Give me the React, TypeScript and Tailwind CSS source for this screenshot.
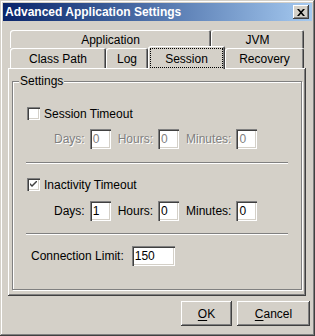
const FONT = "font-['Liberation_Sans',Arial,sans-serif]";

const raised = 'shadow-[inset_-1px_-1px_#404040,inset_1px_1px_#fff,inset_-2px_-2px_#808080]';
const sunken = 'shadow-[inset_1px_1px_#808080,inset_2px_2px_#404040,inset_-1px_-1px_#fff,inset_-2px_-2px_#d4d0c8]';
const tabEdge = 'rounded-tl-[3px] rounded-tr-[2px] shadow-[inset_1px_1px_#fff,inset_-1px_0_#404040,inset_-2px_0_#808080]';

const Tab = ({ label, w, h = 'h-[20px]' }: { label: string; w: string; h?: string }) => (
  <div className={`${w} ${h} ${tabEdge} flex items-center justify-center pt-[2px] text-black`}>{label}</div>
);

const Field = ({ value, w = 'w-[21px]', disabled = false }: { value: string; w?: string; disabled?: boolean }) => (
  <div className={`${w} h-[20px] bg-white ${sunken} flex items-center pl-[3px] ${disabled ? 'text-[#808080]' : 'text-black'}`}>
    {value}
  </div>
);

const Label = ({ text, disabled = false }: { text: string; disabled?: boolean }) => (
  <span className={disabled ? 'text-[#808080] [text-shadow:1px_1px_#fff]' : 'text-black'}>{text}</span>
);

const Check = ({ checked, label }: { checked: boolean; label: string }) => (
  <div className="flex items-center h-[13px] ml-[14px]">
    <div className={`w-[13px] h-[13px] bg-white ${sunken} flex items-center justify-center`}>
      {checked && (
        <svg width="7" height="7" viewBox="0 0 7 7">
          <path d="M0 2 L0 4 L2 6 L7 1 L7 -1 L2 4 Z" fill="#404040" />
        </svg>
      )}
    </div>
    <span className="ml-[4px] text-black">{label}</span>
  </div>
);

const TimeRow = ({ d, h, m, disabled = false }: { d: string; h: string; m: string; disabled?: boolean }) => (
  <div className="flex items-center h-[20px] ml-[41px]">
    <Label text="Days:" disabled={disabled} />
    <div className="ml-[5px]"><Field value={d} disabled={disabled} /></div>
    <div className="ml-[7px]"><Label text="Hours:" disabled={disabled} /></div>
    <div className="ml-[5px]"><Field value={h} disabled={disabled} /></div>
    <div className="ml-[7px]"><Label text="Minutes:" disabled={disabled} /></div>
    <div className="ml-[5px]"><Field value={m} disabled={disabled} /></div>
  </div>
);

const Separator = () => <div className="mx-[13px] h-[2px] border-t border-[#808080] border-b border-b-white" />;

const Button = ({ mn, rest, w }: { mn: string; rest: string; w: string }) => (
  <div className={`${w} h-[25px] ${raised} flex items-center justify-center text-black`}>
    <span><span className="underline underline-offset-2">{mn}</span>{rest}</span>
  </div>
);

export default function App() {
  return (
    <div className={`${FONT} text-[12px] leading-none w-[315px] h-[336px] bg-[#d4d0c8] p-[3px] flex flex-col shadow-[inset_-1px_-1px_#404040,inset_1px_1px_#d4d0c8,inset_-2px_-2px_#808080,inset_2px_2px_#fff]`}>
      {/* Title bar */}
      <div className="h-[18px] flex items-center justify-between bg-gradient-to-r from-[#0a246a] to-[#a6caf0] pl-[2px] pr-[3px]">
        <span className="text-white font-bold text-[12px]">Advanced Application Settings</span>
        <div className={`w-[16px] h-[14px] bg-[#d4d0c8] ${raised} flex items-center justify-center`}>
          <svg width="8" height="7" viewBox="0 0 8 7">
            <path d="M0 0h2l2 2.2L6 0h2L5 3.5 8 7H6L4 4.8 2 7H0l3-3.5z" fill="#000" />
          </svg>
        </div>
      </div>

      {/* Tab control */}
      <div className="mt-[9px] ml-[5px] w-[298px] flex flex-col">
        <div className="flex h-[18px] ml-[2px]">
          <Tab label="Application" w="w-[201px]" h="h-[18px]" />
          <Tab label="JVM" w="w-[93px]" h="h-[18px]" />
        </div>
        <div className="flex items-end h-[20px] ml-[2px] relative z-10">
          <Tab label="Class Path" w="w-[96px]" />
          <Tab label="Log" w="w-[42px]" />
          <div className={`w-[77px] h-[23px] mb-[-1px] bg-[#d4d0c8] ${tabEdge} p-[2px] pb-[1px]`}>
            <div className="w-full h-full border border-dotted border-black flex items-center justify-center pt-[1px]">Session</div>
          </div>
          <Tab label="Recovery" w="w-[79px]" />
        </div>

        {/* Panel */}
        <div className={`h-[228px] ${raised} pt-[13px] px-[4px] pb-[6px]`}>
          <div className="relative h-full border border-[#808080] shadow-[inset_1px_1px_#fff,1px_1px_#fff] flex flex-col">
            <span className="absolute -top-[7px] left-[6px] px-px bg-[#d4d0c8] text-black">Settings</span>
            <div className="mt-[25px]"><Check checked={false} label="Session Timeout" /></div>
            <div className="mt-[9px]"><TimeRow d="0" h="0" m="0" disabled /></div>
            <div className="mt-[13px]"><Separator /></div>
            <div className="mt-[14px]"><Check checked label="Inactivity Timeout" /></div>
            <div className="mt-[10px]"><TimeRow d="1" h="0" m="0" /></div>
            <div className="mt-[12px]"><Separator /></div>
            <div className="mt-[11px] flex items-center h-[20px] ml-[18px]">
              <span>Connection Limit:</span>
              <div className="ml-[8px]"><Field value="150" w="w-[43px]" /></div>
            </div>
          </div>
        </div>
      </div>

      {/* Buttons */}
      <div className="mt-[5px] flex justify-end gap-[5px] pr-[2px]">
        <Button mn="O" rest="K" w="w-[51px]" />
        <Button mn="C" rest="ancel" w="w-[73px]" />
      </div>
    </div>
  );
}
